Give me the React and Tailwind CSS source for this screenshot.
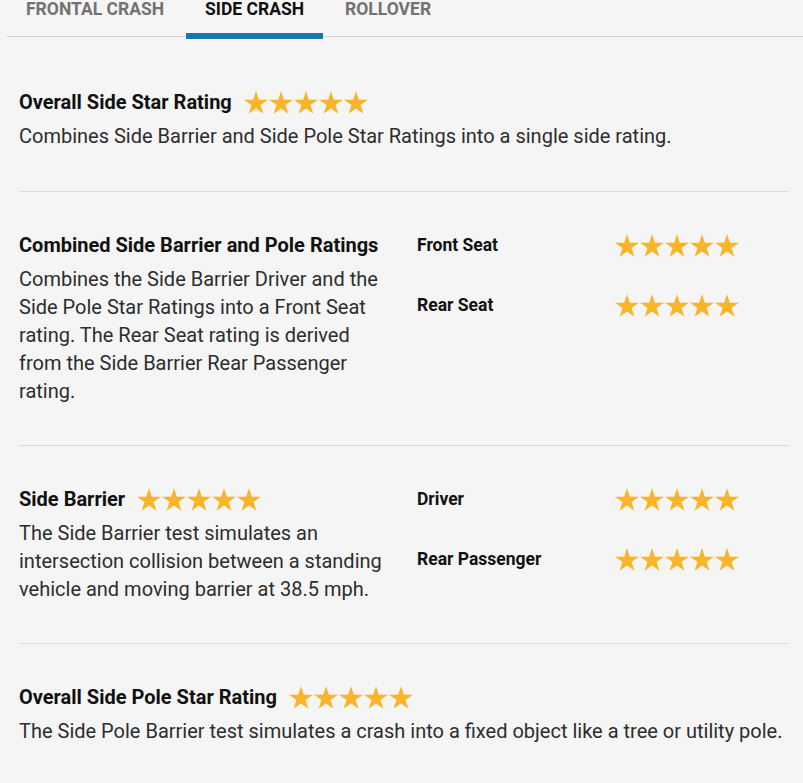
import React from "react"

const tabs = ["FRONTAL CRASH", "SIDE CRASH", "ROLLOVER"]

function Star() {
  return (
    <svg viewBox="0 0 24 23" className="w-6 h-[23px]" fill="#f9b52a">
      <polygon points="12,0 14.83,8.7 23.98,8.71 16.58,14.09 19.41,22.79 12,17.42 4.59,22.79 7.42,14.09 0.02,8.71 9.17,8.7" />
    </svg>
  )
}

function Stars({ className = "" }) {
  return (
    <div className={`flex items-center gap-px ${className}`}>
      {[0, 1, 2, 3, 4].map((i) => (
        <Star key={i} />
      ))}
    </div>
  )
}

function Title({ children }) {
  return (
    <div className="flex items-center h-7">
      <h3 className="text-[20px] leading-7 font-bold text-[#111]">{children}</h3>
      <Stars className="ml-3" />
    </div>
  )
}

function Desc({ children, className = "" }) {
  return <p className={`mt-1.5 text-[20px] leading-7 text-[#2d2d2d] ${className}`}>{children}</p>
}

function RatingRows({ rows }) {
  return (
    <div className="ml-[30px] flex flex-col gap-8">
      {rows.map((r) => (
        <div key={r} className="flex items-center h-7">
          <span className="w-[198px] text-[17.5px] font-bold text-[#111]">{r}</span>
          <Stars />
        </div>
      ))}
    </div>
  )
}

export default function App() {
  return (
    <div className="min-h-[783px] bg-[#f5f5f5] font-['Roboto',sans-serif] overflow-hidden">
      <div className="ml-[7px] flex gap-[3px] border-b border-[#d0d0d0] h-[37px]">
        {tabs.map((t, i) => (
          <div
            key={t}
            className={`relative px-[19px] text-[17.5px] leading-[18px] font-bold ${
              i === 1 ? "text-[#111]" : "text-[#727272]"
            }`}
          >
            {t}
            {i === 1 && <div className="absolute left-0 right-0 -bottom-[3px] h-[6px] bg-[#1477b2]" />}
          </div>
        ))}
      </div>

      <div className="mx-[19px] w-[770px]">
        <section className="pt-[51px] pb-[41px] border-b border-[#dcdcdc]">
          <Title>Overall Side Star Rating</Title>
          <Desc>Combines Side Barrier and Side Pole Star Ratings into a single side rating.</Desc>
        </section>

        <section className="pt-[39px] pb-[40px] border-b border-[#dcdcdc] flex">
          <div className="w-[368px]">
            <h3 className="text-[20px] leading-7 font-bold text-[#111]">Combined Side Barrier and Pole Ratings</h3>
            <Desc>
              Combines the Side Barrier Driver and the Side Pole Star Ratings into a Front Seat rating. The Rear
              Seat rating is derived from the Side Barrier Rear Passenger rating.
            </Desc>
          </div>
          <RatingRows rows={["Front Seat", "Rear Seat"]} />
        </section>

        <section className="pt-[39px] pb-[40px] border-b border-[#dcdcdc] flex">
          <div className="w-[368px]">
            <Title>Side Barrier</Title>
            <Desc>
              The Side Barrier test simulates an intersection collision between a standing vehicle and moving
              barrier at 38.5 mph.
            </Desc>
          </div>
          <RatingRows rows={["Driver", "Rear Passenger"]} />
        </section>

        <section className="pt-[39px] pb-[40px]">
          <Title>Overall Side Pole Star Rating</Title>
          <Desc>The Side Pole Barrier test simulates a crash into a fixed object like a tree or utility pole.</Desc>
        </section>
      </div>
    </div>
  )
}
